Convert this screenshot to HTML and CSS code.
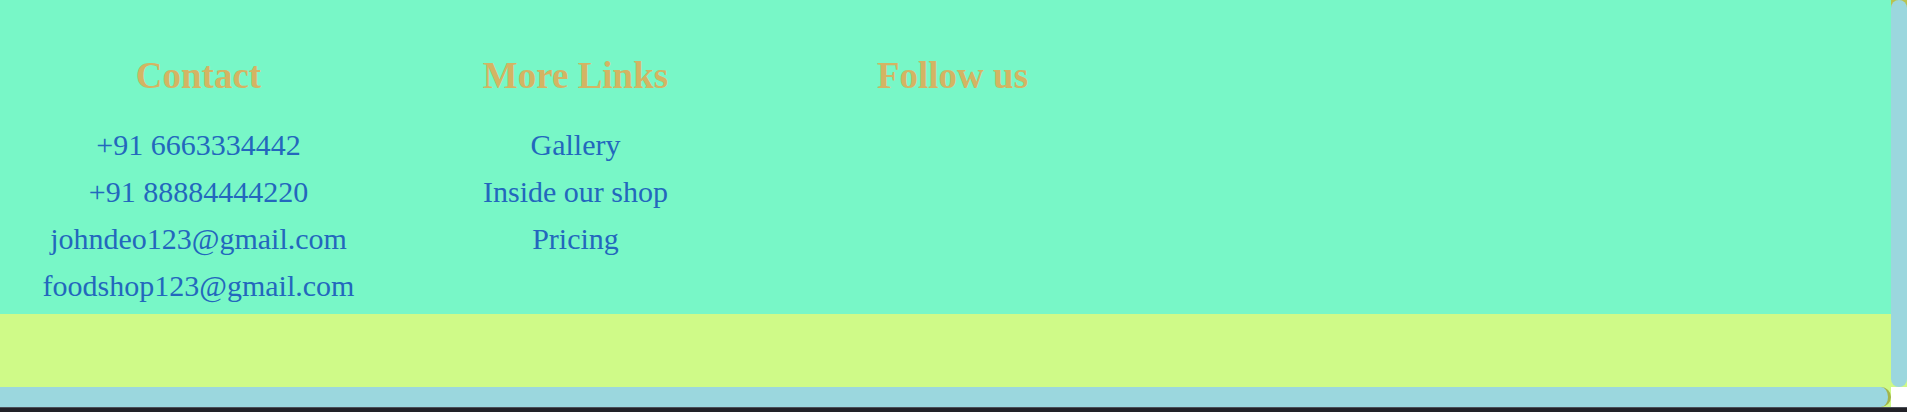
FILE: index.html
```
<!DOCTYPE html>
<html lang="en">
<head>
<meta charset="utf-8">
<title>Food Shop</title>
<link rel="stylesheet" href="styles.css">
</head>
<body>
<div class="frame">
  <div class="viewport">
    <footer class="footer">
      <section class="column">
        <h2 class="heading">Contact</h2>
        <ul class="list">
          <li>+91 6663334442</li>
          <li>+91 88884444220</li>
          <li>johndeo123@gmail.com</li>
          <li>foodshop123@gmail.com</li>
        </ul>
      </section>
      <section class="column">
        <h2 class="heading">More Links</h2>
        <ul class="list">
          <li><a href="#gallery">Gallery</a></li>
          <li><a href="#shop">Inside our shop</a></li>
          <li><a href="#pricing">Pricing</a></li>
        </ul>
      </section>
      <section class="column">
        <h2 class="heading">Follow us</h2>
      </section>
    </footer>
  </div>
  <div class="track track-y"><div class="thumb thumb-y"></div></div>
  <div class="track track-x"><div class="thumb thumb-x"></div></div>
  <div class="corner"></div>
</div>
<div class="taskbar"></div>
</body>
</html>
```
FILE: styles.css
```
* {
  box-sizing: border-box;
}

body {
  display: flex;
  flex-direction: column;
  height: 100vh;
  margin: 0;
  overflow: hidden;
  font-family: "Liberation Serif", "Times New Roman", serif;
}

.frame {
  flex: 1;
  display: grid;
  grid-template-columns: 1fr 16px;
  grid-template-rows: 1fr 20px;
}

.viewport {
  background: #cffa88;
}

.footer {
  display: grid;
  grid-template-columns: repeat(3, 377px);
  padding: 53px 0 0 10px;
  background: #78f7c7;
}

.column {
  text-align: center;
}

.heading {
  margin: 0 0 22px;
  color: #d4b463;
  font-size: 37px;
  line-height: 46px;
}

.list {
  margin: 0;
  padding: 0 0 5px;
  list-style: none;
  color: #2367bd;
  font-size: 30px;
  line-height: 47px;
}

.list a {
  color: inherit;
  text-decoration: none;
}

.track {
  overflow: hidden;
}

.track-x {
  background: #cffa88;
}

.track-y {
  background: linear-gradient(#b9c24e 8px, #cffa88 8px);
}

.thumb {
  height: 100%;
  background: #9bd7de;
}

.thumb-y {
  border-radius: 8px;
}

.thumb-x {
  border-right: 3px solid #a3b548;
  border-radius: 0 10px 10px 0;
}

.corner {
  background: #ffffff;
}

.taskbar {
  height: 5px;
  background: #222127;
  border-top: 1px solid #4b5058;
}
```
